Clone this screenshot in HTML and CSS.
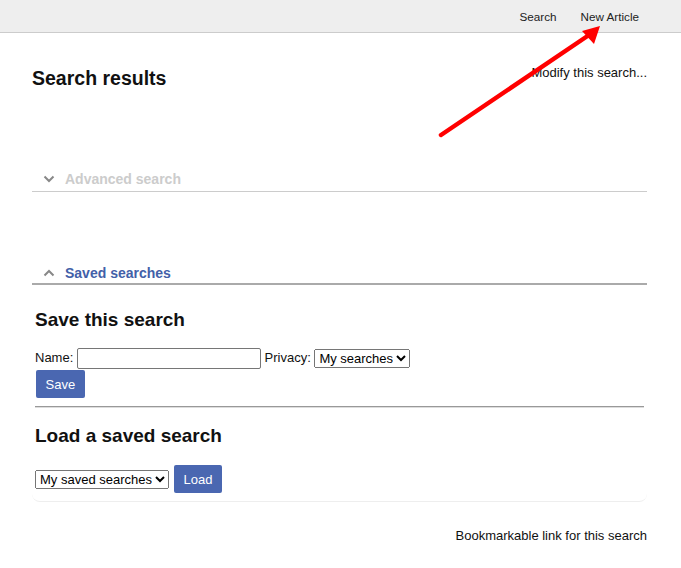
FILE: index.html
```html
<!DOCTYPE html>
<html>
<head>
    <title>Search results</title>
    <link rel="stylesheet" href="styles.css">
</head>
<body>
    <div class="topbar">
        <a href="#">Search</a>
        <a href="#">New Article</a>
    </div>

    <div class="main">
        <div class="page-head">
            <h1>Search results</h1>
            <a href="#" class="modify">Modify this search...</a>
        </div>

        <div class="toggle advanced">
            <svg class="chev" width="12" height="8" viewBox="0 0 12 8"><polyline points="1.5,1.5 6,6 10.5,1.5"/></svg>
            <span>Advanced search</span>
        </div>

        <div class="toggle saved">
            <svg class="chev" width="12" height="8" viewBox="0 0 12 8"><polyline points="1.5,6.5 6,2 10.5,6.5"/></svg>
            <span>Saved searches</span>
        </div>

        <div class="panel">
            <h2>Save this search</h2>
            <div class="form-row">
                Name: <input type="text" class="name-input"> Privacy: <select><option>My searches</option></select>
            </div>
            <button class="btn save-btn">Save</button>
            <hr>
            <h2>Load a saved search</h2>
            <div class="load-row">
                <select><option>My saved searches</option></select>
                <button class="btn">Load</button>
            </div>
        </div>

        <div class="bookmark">
            <a href="#">Bookmarkable link for this search</a>
        </div>
    </div>

    <svg class="arrow" width="681" height="568" viewBox="0 0 681 568">
        <line x1="441" y1="135" x2="589" y2="35"/>
        <polygon points="600,26 582,31 594,44"/>
    </svg>
</body>
</html>
```

FILE: styles.css
```css
body {
    margin: 0;
    font-family: "Liberation Sans", Arial, sans-serif;
    font-size: 13px;
    color: #111;
    position: relative;
}
a {
    color: #111;
    text-decoration: none;
}
.topbar {
    height: 33px;
    background-color: #eeeeee;
    border-bottom: 1px solid #cccccc;
    display: flex;
    justify-content: flex-end;
    align-items: center;
    gap: 24px;
    padding: 1px 42px 0 0;
    box-sizing: border-box;
    font-size: 11.7px;
}
.topbar a {
    color: #222;
}
.main {
    padding: 0 34px 0 32px;
}
.page-head {
    display: flex;
    justify-content: space-between;
    align-items: flex-start;
    margin-top: 33px;
}
h1 {
    margin: 0;
    font-size: 19.5px;
    line-height: 24px;
}
.modify {
    line-height: 16px;
    margin-top: -1px;
}
.toggle {
    display: flex;
    align-items: center;
    gap: 10px;
    padding-left: 11px;
    font-size: 14px;
    font-weight: bold;
    line-height: 20px;
}
.chev polyline {
    fill: none;
    stroke: #888;
    stroke-width: 2;
}
.advanced {
    margin-top: 79px;
    padding-bottom: 2px;
    border-bottom: 1px solid #cccccc;
    color: #cccccc;
}
.saved {
    margin-top: 70px;
    padding-top: 1px;
    border-bottom: 2px solid #aaaaaa;
    color: #4260a8;
}
.panel {
    padding: 0 3px 8px 3px;
    border-bottom: 1px solid #eeeeee;
    border-radius: 0 0 8px 8px;
}
h2 {
    margin: 0;
    font-size: 19px;
    line-height: 24px;
}
.panel h2:first-child {
    margin-top: 23px;
}
.form-row {
    margin-top: 15px;
    line-height: 21px;
}
.name-input {
    width: 184px;
    height: 21px;
    box-sizing: border-box;
    border: 1px solid #767676;
    border-radius: 2px;
    padding: 0 3px;
    font-size: 13px;
    vertical-align: middle;
}
select {
    font-family: "Liberation Sans", Arial, sans-serif;
    font-size: 13px;
    vertical-align: middle;
}
.btn {
    background-color: #4a67b1;
    color: white;
    border: none;
    border-radius: 2px;
    font-family: "Liberation Sans", Arial, sans-serif;
    font-size: 13px;
    height: 28px;
    padding: 0 9.5px;
    cursor: pointer;
}
.save-btn {
    display: block;
    margin: 1px 0 0 1px;
}
hr {
    margin: 8px 0 16px 0;
    border: none;
    border-top: 1px solid #999;
    border-bottom: 1px solid #ddd;
}
.load-row {
    display: flex;
    align-items: center;
    gap: 5px;
    margin-top: 17px;
}
.bookmark {
    text-align: right;
    margin-top: 26px;
    line-height: 16px;
}
.arrow {
    position: absolute;
    top: 0;
    left: 0;
    pointer-events: none;
}
.arrow line {
    stroke: #ff0000;
    stroke-width: 4.5;
    stroke-linecap: round;
}
.arrow polygon {
    fill: #ff0000;
}
```
